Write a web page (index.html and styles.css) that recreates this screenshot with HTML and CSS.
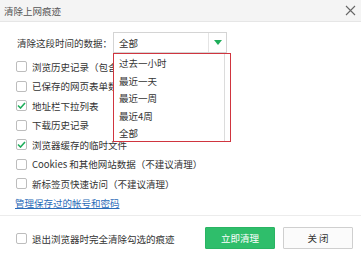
FILE: index.html
```html
<!DOCTYPE html>
<html>
<head>
<meta charset="utf-8">
<link rel="stylesheet" href="styles.css">
</head>
<body>
<div class="dialog">
  <div class="titlebar">
    <span class="title">清除上网痕迹</span>
    <svg class="close" width="11" height="11" viewBox="0 0 11 11"><path d="M1 1L10 10M10 1L1 10" stroke="#666" stroke-width="1.1" fill="none"/></svg>
  </div>
  <div class="content">
    <div class="range-row">
      <span class="range-label">清除这段时间的数据：</span>
      <div class="select">
        <span class="select-value">全部</span>
        <span class="select-arrow"><svg width="8" height="5" viewBox="0 0 8 5"><path d="M0 0H8L4 5Z" fill="#1fae5b"/></svg></span>
      </div>
    </div>
    <ul class="options">
      <li class="opt"><span class="cb"></span>浏览历史记录（包含输入的网址）</li>
      <li class="opt"><span class="cb"></span>已保存的网页表单数据</li>
      <li class="opt"><span class="cb checked"><svg width="9" height="7" viewBox="0 0 9 7"><path d="M1 3.5L3.5 6L8 1" stroke="#1fae5b" stroke-width="1.6" fill="none"/></svg></span>地址栏下拉列表</li>
      <li class="opt"><span class="cb"></span>下载历史记录</li>
      <li class="opt"><span class="cb checked"><svg width="9" height="7" viewBox="0 0 9 7"><path d="M1 3.5L3.5 6L8 1" stroke="#1fae5b" stroke-width="1.6" fill="none"/></svg></span>浏览器缓存的临时文件</li>
      <li class="opt"><span class="cb"></span>Cookies 和其他网站数据（不建议清理）</li>
      <li class="opt"><span class="cb"></span>新标签页快速访问（不建议清理）</li>
      <li class="opt link-row"><a class="link" href="#">管理保存过的帐号和密码</a></li>
    </ul>
    <div class="dropdown">
      <div class="dd-item">过去一小时</div>
      <div class="dd-item">最近一天</div>
      <div class="dd-item">最近一周</div>
      <div class="dd-item">最近4周</div>
      <div class="dd-item">全部</div>
    </div>
  </div>
  <div class="footer">
    <div class="footer-check"><span class="cb"></span>退出浏览器时完全清除勾选的痕迹</div>
    <div class="buttons">
      <button class="btn primary">立即清理</button>
      <button class="btn">关 闭</button>
    </div>
  </div>
</div>
</body>
</html>
```

FILE: styles.css
```css
* { box-sizing: border-box; }
html, body { margin: 0; padding: 0; }
body {
  width: 361px;
  height: 257px;
  background: #fff;
  font-family: "Noto Sans CJK SC", "Liberation Sans", sans-serif;
  font-size: 9.5px;
  color: #333;
  overflow: hidden;
}
.dialog {
  width: 361px;
  height: 257px;
  display: flex;
  flex-direction: column;
  background: #fff;
}
.titlebar {
  height: 22px;
  background: #f4f4f4;
  border-bottom: 1px solid #e6e6e6;
  display: flex;
  align-items: center;
  justify-content: space-between;
  padding: 0 5px 0 4px;
}
.title { color: #555; }
.content {
  position: relative;
  flex: 1;
  padding: 10px 0 0 17px;
}
.range-row {
  display: flex;
  align-items: center;
  height: 21px;
}
.range-label { width: 96px; white-space: nowrap; color: #333; }
.select {
  width: 114px;
  height: 21px;
  border: 1px solid #d4d4d4;
  display: flex;
  align-items: center;
  justify-content: space-between;
  background: #fff;
}
.select-value { padding-left: 5px; }
.select-arrow {
  width: 18px;
  height: 100%;
  border-left: 1px solid #e4e4e4;
  display: flex;
  align-items: center;
  justify-content: center;
}
.options {
  list-style: none;
  margin: 4px 0 0 -1px;
  padding: 0;
}
.opt {
  height: 19.5px;
  display: flex;
  align-items: center;
  white-space: nowrap;
}
.cb {
  width: 11px;
  height: 11px;
  border: 1px solid #bdbdbd;
  border-radius: 2px;
  background: #fff;
  margin-right: 5px;
  display: inline-flex;
  align-items: center;
  justify-content: center;
  flex: none;
}
.link-row { margin-left: -1px; }
.link { color: #2a6bb8; text-decoration: underline; }
.dropdown {
  position: absolute;
  left: 113px;
  top: 31px;
  width: 118px;
  height: 89px;
  border: 1px solid #d0353f;
  background: #fff;
  padding: 1px 0 0 5px;
  box-shadow: inset -5px 0 0 #fff, inset -6px 0 0 #dcdcdc;
}
.dd-item {
  height: 17.6px;
  line-height: 17.6px;
  color: #333;
}
.footer {
  height: 42px;
  border-top: 1px solid #ececec;
  display: flex;
  align-items: center;
  justify-content: space-between;
  padding: 0 8px 0 16px;
}
.footer-check { display: flex; align-items: center; padding-top: 4px; }
.buttons { display: flex; gap: 8px; padding-top: 2px; }
.btn {
  width: 70px;
  height: 22px;
  border: 1px solid #cfcfcf;
  background: #fbfbfb;
  font-family: inherit;
  font-size: 9.5px;
  color: #333;
  padding: 0;
  border-radius: 1px;
}
.btn.primary {
  background: #2fbe6b;
  border-color: #2ab463;
  color: #fff;
}
```
